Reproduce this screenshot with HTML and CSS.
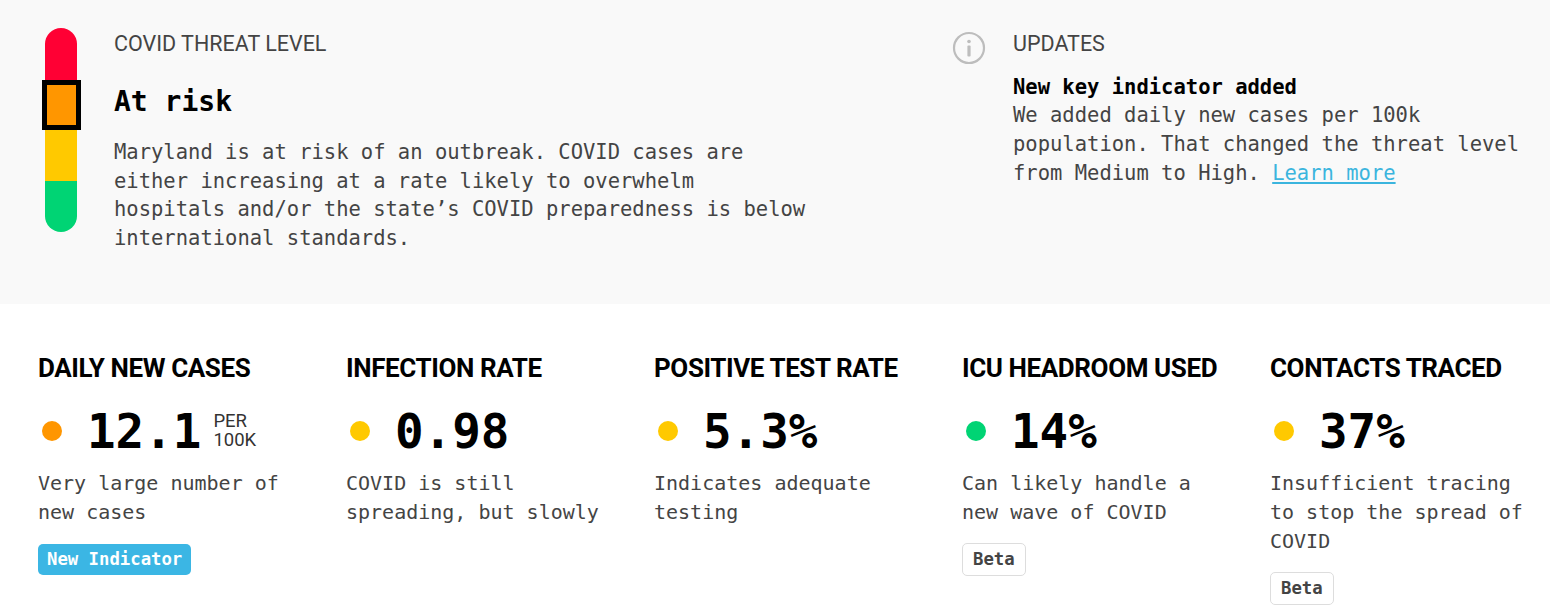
FILE: index.html
```html
<!DOCTYPE html>
<html lang="en">
<head>
    <meta charset="UTF-8">
    <meta name="viewport" content="width=device-width, initial-scale=1.0">
    <title>Maryland COVID Threat Level</title>
    <link rel="stylesheet" href="styles.css">
</head>
<body>

    <!-- Threat level + updates -->
    <section class="summary">
        <div class="threat">
            <div class="meter">
                <div class="level level-red"></div>
                <div class="level level-orange current"></div>
                <div class="level level-yellow"></div>
                <div class="level level-green"></div>
            </div>
            <div class="threat-text">
                <div class="label">COVID THREAT LEVEL</div>
                <h1>At risk</h1>
                <p>Maryland is at risk of an outbreak. COVID cases are either increasing at a rate likely to overwhelm hospitals and/or the state’s COVID preparedness is below international standards.</p>
            </div>
        </div>

        <div class="updates">
            <svg class="info-icon" width="34" height="34" viewBox="0 0 34 34">
                <circle cx="17" cy="17" r="15" fill="none" stroke="#bdbdbd" stroke-width="2.2"/>
                <circle cx="17" cy="10.5" r="1.8" fill="#bdbdbd"/>
                <rect x="15.4" y="14.5" width="3.2" height="11" rx="1" fill="#bdbdbd"/>
            </svg>
            <div class="updates-text">
                <div class="label">UPDATES</div>
                <h2>New key indicator added</h2>
                <p>We added daily new cases per 100k population. That changed the threat level from Medium to High. <a href="#">Learn more</a></p>
            </div>
        </div>
    </section>

    <!-- Key indicators -->
    <section class="metrics">
        <div class="metric">
            <h3>DAILY NEW CASES</h3>
            <div class="value-row">
                <span class="dot orange"></span>
                <span class="value">12.1</span>
                <span class="unit">PER<br>100K</span>
            </div>
            <p>Very large number of new cases</p>
            <span class="tag tag-new">New Indicator</span>
        </div>
        <div class="metric">
            <h3>INFECTION RATE</h3>
            <div class="value-row">
                <span class="dot yellow"></span>
                <span class="value">0.98</span>
            </div>
            <p>COVID is still spreading, but slowly</p>
        </div>
        <div class="metric">
            <h3>POSITIVE TEST RATE</h3>
            <div class="value-row">
                <span class="dot yellow"></span>
                <span class="value">5.3%</span>
            </div>
            <p>Indicates adequate testing</p>
        </div>
        <div class="metric">
            <h3>ICU HEADROOM USED</h3>
            <div class="value-row">
                <span class="dot green"></span>
                <span class="value">14%</span>
            </div>
            <p>Can likely handle a new wave of COVID</p>
            <span class="tag tag-beta">Beta</span>
        </div>
        <div class="metric">
            <h3>CONTACTS TRACED</h3>
            <div class="value-row">
                <span class="dot yellow"></span>
                <span class="value">37%</span>
            </div>
            <p>Insufficient tracing to stop the spread of COVID</p>
            <span class="tag tag-beta">Beta</span>
        </div>
    </section>

</body>
</html>
```

FILE: styles.css
```css
body {
    margin: 0;
    background-color: #fff;
    font-family: "DejaVu Sans Mono", monospace;
    color: #333;
}

p {
    margin: 0;
}

/* Top band */
.summary {
    display: flex;
    justify-content: space-between;
    height: 304px;
    box-sizing: border-box;
    padding: 28px 0 0 42px;
    background-color: #f9f9f9;
}

.threat {
    display: flex;
    gap: 34px;
}

.meter {
    display: flex;
    flex-direction: column;
    align-items: center;
    width: 38px;
}

.level {
    width: 32px;
    height: 51px;
    box-sizing: border-box;
}

.level-red {
    background-color: #ff0034;
    border-radius: 16px 16px 0 0;
    height: 52px;
}

.level-orange {
    background-color: #ff9600;
}

.level-yellow {
    background-color: #ffc900;
}

.level-green {
    background-color: #00d474;
    border-radius: 0 0 16px 16px;
}

.level.current {
    width: 39px;
    height: 50px;
    border: 5px solid #000;
}

.label {
    font-family: Roboto, sans-serif;
    font-size: 21.5px;
    color: #444;
    line-height: 32px;
}

.threat-text h1 {
    margin: 24px 0 18px;
    font-size: 28px;
    line-height: 36px;
    color: #000;
}

.threat-text p {
    width: 700px;
    font-size: 20.5px;
    line-height: 28.7px;
    color: #444;
}

.updates {
    display: flex;
    gap: 27px;
    width: 598px;
}

.info-icon {
    flex-shrink: 0;
    margin-top: 3px;
}

.updates-text h2 {
    margin: 13px 0 0;
    font-size: 20.5px;
    line-height: 28px;
    color: #000;
}

.updates-text p {
    font-size: 20.5px;
    line-height: 29px;
    color: #444;
}

.updates-text a {
    color: #3bb5de;
}

/* Indicator columns */
.metrics {
    display: grid;
    grid-template-columns: repeat(5, 270px);
    column-gap: 38px;
    padding: 46px 0 0 38px;
}

.metric h3 {
    margin: 0;
    font-family: Roboto, sans-serif;
    font-size: 26px;
    font-weight: 700;
    line-height: 36px;
    color: #000;
    letter-spacing: -0.4px;
}

.value-row {
    display: flex;
    align-items: center;
    height: 56px;
    margin: 17px 0 10px;
}

.dot {
    width: 20px;
    height: 20px;
    border-radius: 50%;
    margin: 0 25px 0 4px;
}

.dot.orange { background-color: #ff9600; }
.dot.yellow { background-color: #ffc900; }
.dot.green { background-color: #00d474; }

.value {
    font-size: 47.5px;
    font-weight: 700;
    color: #000;
}

.unit {
    margin-left: 12px;
    font-family: Roboto, sans-serif;
    font-size: 18.5px;
    line-height: 19px;
    color: #333;
}

.metric p {
    font-size: 20px;
    line-height: 29px;
    color: #444;
}

.tag {
    display: inline-block;
    margin-top: 17px;
    padding: 0 9px;
    font-size: 17.3px;
    font-weight: 700;
    line-height: 31px;
    border-radius: 5px;
}

.tag-new {
    background-color: #3bb6e4;
    color: #fff;
}

.tag-beta {
    margin-top: 16px;
    padding: 0 10px;
    background-color: #fff;
    color: #444;
    border: 1px solid #ddd;
}
```
